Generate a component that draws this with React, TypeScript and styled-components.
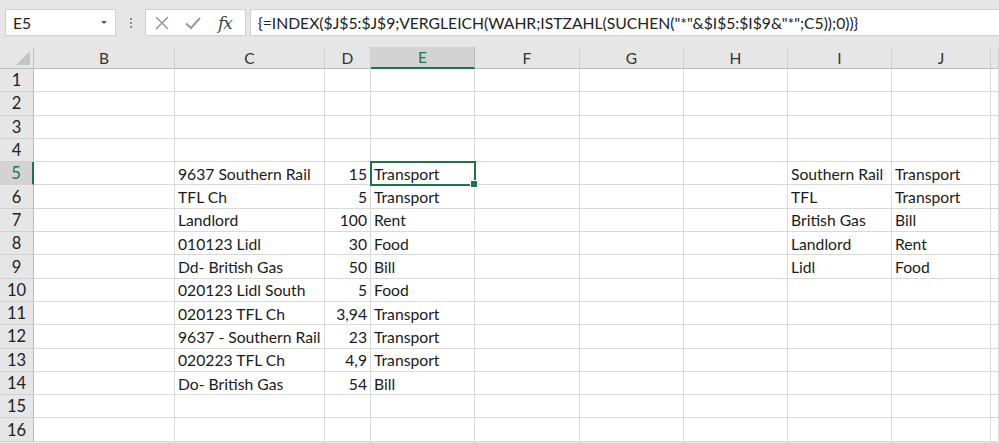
import React from "react";
import styled, { createGlobalStyle } from "styled-components";

const GlobalStyle = createGlobalStyle`
  html, body {
    margin: 0;
    padding: 0;
    background: #ffffff;
    font-family: Lato, "Open Sans", sans-serif;
  }
`;

const COLS = ["B", "C", "D", "E", "F", "G", "H", "I", "J", ""];
const WIDTHS = "34px 141px 150px 46px 104px 105px 104px 104px 104px 99px 1fr";
const ROW_H = 23.3;

type CellData = { text: string; num?: boolean };
const data: Record<number, Record<string, CellData>> = {
  5: { C: { text: "9637 Southern Rail" }, D: { text: "15", num: true }, E: { text: "Transport" }, I: { text: "Southern Rail" }, J: { text: "Transport" } },
  6: { C: { text: "TFL Ch" }, D: { text: "5", num: true }, E: { text: "Transport" }, I: { text: "TFL" }, J: { text: "Transport" } },
  7: { C: { text: "Landlord" }, D: { text: "100", num: true }, E: { text: "Rent" }, I: { text: "British Gas" }, J: { text: "Bill" } },
  8: { C: { text: "010123 Lidl" }, D: { text: "30", num: true }, E: { text: "Food" }, I: { text: "Landlord" }, J: { text: "Rent" } },
  9: { C: { text: "Dd- British Gas" }, D: { text: "50", num: true }, E: { text: "Bill" }, I: { text: "Lidl" }, J: { text: "Food" } },
  10: { C: { text: "020123 Lidl South" }, D: { text: "5", num: true }, E: { text: "Food" } },
  11: { C: { text: "020123 TFL Ch" }, D: { text: "3,94", num: true }, E: { text: "Transport" } },
  12: { C: { text: "9637 - Southern Rail" }, D: { text: "23", num: true }, E: { text: "Transport" } },
  13: { C: { text: "020223 TFL Ch" }, D: { text: "4,9", num: true }, E: { text: "Transport" } },
  14: { C: { text: "Do- British Gas" }, D: { text: "54", num: true }, E: { text: "Bill" } },
};

const Page = styled.div`
  width: 999px;
  height: 443px;
  overflow: hidden;
  background: #e6e6e6;
`;

const FormulaBar = styled.div`
  height: 47px;
  display: flex;
  align-items: flex-start;
  padding-top: 9px;
  box-sizing: border-box;
  padding-left: 5px;
`;

const NameBox = styled.div`
  width: 111px;
  height: 27px;
  box-sizing: border-box;
  background: #fff;
  border: 1px solid #d0d0d0;
  display: flex;
  align-items: center;
  justify-content: space-between;
  padding: 0 8px 0 7px;
  font-size: 15.7px;
  color: #222;
`;

const Caret = styled.span`
  width: 0;
  height: 0;
  border-left: 3px solid transparent;
  border-right: 3px solid transparent;
  border-top: 3px solid #555;
`;

const Grip = styled.div`
  width: 29px;
  height: 27px;
  display: flex;
  flex-direction: column;
  align-items: center;
  justify-content: center;
  gap: 2px;
  span {
    width: 2px;
    height: 2px;
    background: #8a8a8a;
  }
`;

const IconBox = styled.div`
  width: 101px;
  height: 27px;
  box-sizing: border-box;
  background: #fff;
  border: 1px solid #d0d0d0;
  display: flex;
  align-items: center;
  padding-left: 8px;
  gap: 14px;
`;

const Fx = styled.span`
  font-family: "DejaVu Serif", "Liberation Serif", serif;
  font-style: italic;
  font-size: 17px;
  color: #444;
  letter-spacing: -1px;
  margin-left: 2px;
`;

const FormulaInput = styled.div`
  flex: 1;
  height: 27px;
  margin-left: 4px;
  box-sizing: border-box;
  background: #fff;
  border: 1px solid #d0d0d0;
  border-right: none;
  display: flex;
  align-items: center;
  padding-left: 7px;
  font-size: 15.7px;
  color: #222;
  white-space: nowrap;
`;

const Sheet = styled.div`
  display: grid;
  grid-template-columns: ${WIDTHS};
  grid-template-rows: 22px repeat(16, ${ROW_H}px);
  background: #fff;
`;

const Corner = styled.div`
  background: #e6e6e6;
  border-right: 1px solid #bdbdbd;
  border-bottom: 1px solid #bdbdbd;
  position: relative;
  &::after {
    content: "";
    position: absolute;
    right: 3px;
    bottom: 3px;
    width: 0;
    height: 0;
    border-left: 14px solid transparent;
    border-bottom: 14px solid #c3c3c3;
  }
`;

const ColHead = styled.div<{ $active?: boolean }>`
  background: ${(p) => (p.$active ? "#d3d3d3" : "#e6e6e6")};
  border-right: 1px solid ${(p) => (p.$active ? "#b5b5b5" : "#d0d0d0")};
  border-bottom: ${(p) => (p.$active ? "2px solid #217346" : "1px solid #bdbdbd")};
  color: ${(p) => (p.$active ? "#217346" : "#333")};
  font-size: 15.5px;
  display: flex;
  align-items: center;
  justify-content: center;
  box-sizing: border-box;
`;

const RowHead = styled.div<{ $active?: boolean }>`
  background: ${(p) => (p.$active ? "#d3d3d3" : "#e6e6e6")};
  border-right: ${(p) => (p.$active ? "2px solid #217346" : "1px solid #bdbdbd")};
  border-bottom: 1px solid #d0d0d0;
  color: ${(p) => (p.$active ? "#217346" : "#222")};
  font-size: 16.5px;
  display: flex;
  align-items: center;
  justify-content: center;
  box-sizing: border-box;
`;

const Cell = styled.div<{ $num?: boolean; $selected?: boolean }>`
  border-right: 1px solid #d9d9d9;
  border-bottom: 1px solid #d9d9d9;
  box-sizing: border-box;
  font-size: 15.7px;
  color: #1a1a1a;
  display: flex;
  align-items: center;
  justify-content: ${(p) => (p.$num ? "flex-end" : "flex-start")};
  padding: 1px 3px 0 3px;
  white-space: nowrap;
  position: relative;
  ${(p) =>
    p.$selected &&
    `
    outline: 2px solid #217346;
    outline-offset: -1px;
    z-index: 1;
    &::after {
      content: "";
      position: absolute;
      right: -4px;
      bottom: -4px;
      width: 6px;
      height: 6px;
      background: #217346;
      border: 1px solid #fff;
    }
  `}
`;

const CancelIcon = () => (
  <svg width="16" height="16" viewBox="0 0 16 16">
    <path d="M2 2 L14 14 M14 2 L2 14" stroke="#9a9a9a" strokeWidth="1.6" fill="none" />
  </svg>
);

const CheckIcon = () => (
  <svg width="18" height="16" viewBox="0 0 18 16">
    <path d="M2 8.5 L7 13 L16 3" stroke="#9a9a9a" strokeWidth="2" fill="none" />
  </svg>
);

export default function App() {
  const rows = Array.from({ length: 16 }, (_, i) => i + 1);
  return (
    <Page>
      <GlobalStyle />
      <FormulaBar>
        <NameBox>
          E5
          <Caret />
        </NameBox>
        <Grip>
          <span />
          <span />
          <span />
        </Grip>
        <IconBox>
          <CancelIcon />
          <CheckIcon />
          <Fx>fx</Fx>
        </IconBox>
        <FormulaInput>
          {'{=INDEX($J$5:$J$9;VERGLEICH(WAHR;ISTZAHL(SUCHEN("*"&$I$5:$I$9&"*";C5));0))}'}
        </FormulaInput>
      </FormulaBar>
      <Sheet>
        <Corner />
        {COLS.map((c, i) => (
          <ColHead key={i} $active={c === "E"}>
            {c}
          </ColHead>
        ))}
        {rows.map((r) => (
          <React.Fragment key={r}>
            <RowHead $active={r === 5}>{r}</RowHead>
            {COLS.map((c, i) => {
              const cell = data[r]?.[c];
              return (
                <Cell key={i} $num={cell?.num} $selected={r === 5 && c === "E"}>
                  {cell?.text}
                </Cell>
              );
            })}
          </React.Fragment>
        ))}
      </Sheet>
    </Page>
  );
}
